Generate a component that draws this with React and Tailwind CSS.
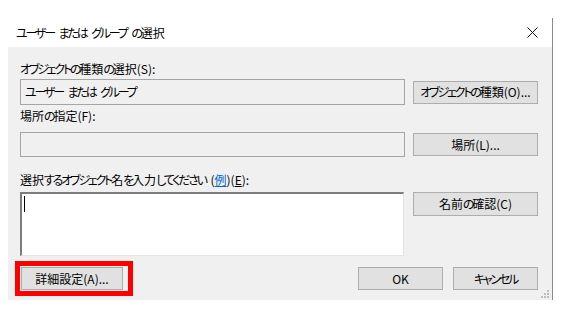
import React from 'react';

const font = "font-['Meiryo_UI','Noto_Sans_CJK_JP',sans-serif] [font-feature-settings:'palt']";

// Meiryo UI draws kana narrower than kanji; squeeze the kana runs to match
function J({ t }) {
    const parts = t.split(/([\u3040-\u30ff]+)/);
    return (
        <span>
            {parts.map((p, i) =>
                i % 2 === 1 ? (
                    <span key={i} className="tracking-[-2.2px]">{p}</span>
                ) : (
                    <span key={i} className={p.startsWith(' ') ? 'pl-[2px]' : ''}>{p}</span>
                )
            )}
        </span>
    );
}

function Btn({ children, className = '' }) {
    return (
        <button
            type="button"
            className={`h-[23px] bg-[#e1e1e1] border border-[#adadad] text-[12px] leading-none text-black whitespace-nowrap flex items-center justify-center ${className}`}
        >
            {children}
        </button>
    );
}

function Grip() {
    const dots = [[6, 0], [3, 3], [6, 3], [0, 6], [3, 6], [6, 6]];
    return (
        <svg width="9" height="9" viewBox="0 0 9 9" className="absolute right-[3px] bottom-[2px]">
            {dots.map(([x, y], i) => (
                <rect key={i} x={x + 1} y={y + 1} width="2" height="2" fill="#bdbdbd" />
            ))}
        </svg>
    );
}

export default function App() {
    return (
        <div className={`w-[562px] h-[310px] bg-white pt-[18px] pl-[8px] ${font}`}>
            <div className="w-[545px] border-r border-[#8a8a8a] flex flex-col">
                {/* Title bar */}
                <div className="h-[29px] bg-white flex items-center justify-between pl-[8px] pr-[14px]">
                    <span className="text-[12px] text-black whitespace-nowrap"><J t="ユーザー または グループ の選択" /></span>
                    <svg width="11" height="11" viewBox="0 0 11 11">
                        <path d="M0.5 0.5 L10.5 10.5 M10.5 0.5 L0.5 10.5" stroke="#111" strokeWidth="1" />
                    </svg>
                </div>

                {/* Body */}
                <div className="relative h-[253px] bg-[#f0f0f0] pl-[12px] pt-[14px]">
                    <div className="h-[16px] leading-[16px] text-[12px] text-black"><J t="オブジェクトの種類の選択(S):" /></div>
                    <div className="mt-[2px] flex items-center gap-[8px]">
                        <div className="w-[385px] h-[26px] border border-[#a5a5a5] bg-[#f0f0f0] pl-[4px] flex items-center text-[12px] text-black whitespace-nowrap">
                            <J t="ユーザー または グループ" />
                        </div>
                        <Btn className="w-[125px]"><J t="オブジェクトの種類(O)..." /></Btn>
                    </div>

                    <div className="mt-[3px] h-[16px] leading-[16px] text-[12px] text-black"><J t="場所の指定(F):" /></div>
                    <div className="mt-[8px] flex items-center gap-[8px]">
                        <div className="w-[385px] h-[25px] border border-[#a5a5a5] bg-[#f0f0f0]" />
                        <Btn className="w-[125px]">場所(L)...</Btn>
                    </div>

                    <div className="mt-[15px] h-[16px] leading-[16px] text-[12px] text-black whitespace-nowrap">
                        <J t="選択するオブジェクト名を入力してください (" />
                        <span className="text-[#0066cc] underline">例</span>)(<span className="underline">E</span>):
                    </div>
                    <div className="mt-[4px] flex items-start gap-[9px]">
                        <div className="w-[384px] h-[64px] bg-white border-t-2 border-l-2 border-[#7d7d7d] border-r border-b border-r-[#e3e3e3] border-b-[#e3e3e3] pl-[2px] pt-[2px]">
                            <div className="w-px h-[16px] bg-black" />
                        </div>
                        <Btn className="w-[125px] h-[24px]"><J t="名前の確認(C)" /></Btn>
                    </div>

                    <div className="mt-[11px] flex items-center pr-[14px]">
                        <div className="relative ml-[1px]">
                            <Btn className="w-[102px]">詳細設定(A)...</Btn>
                            <div className="absolute -left-[6px] -top-[6px] -right-[10px] -bottom-[6px] border-[5px] border-[#ff0000]" />
                        </div>
                        <div className="ml-auto flex gap-[10px]">
                            <Btn className="w-[85px]">OK</Btn>
                            <Btn className="w-[85px]"><J t="キャンセル" /></Btn>
                        </div>
                    </div>
                    <Grip />
                </div>
            </div>
        </div>
    );
}
